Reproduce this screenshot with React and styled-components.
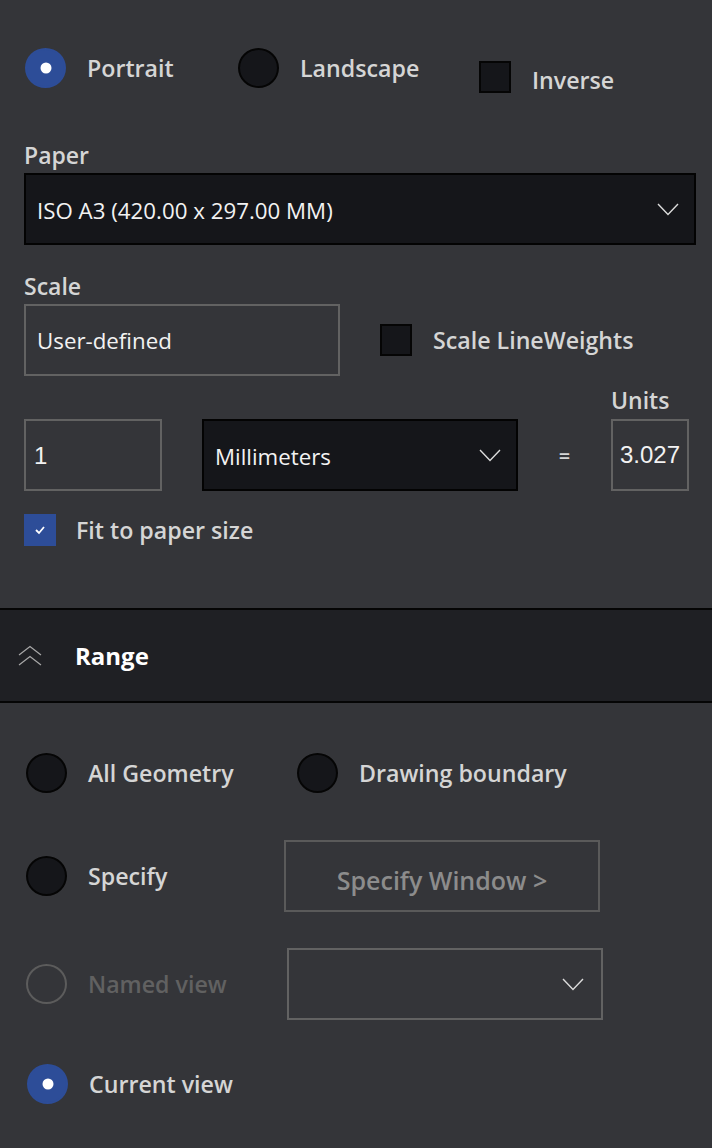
import styled, { createGlobalStyle } from "styled-components";

const GlobalStyle = createGlobalStyle`
  html, body {
    margin: 0;
    padding: 0;
    background: #343539;
  }
  body {
    font-family: "Open Sans", "Noto Sans", sans-serif;
  }
`;

const Chevron = ({ size = 22 }) => (
  <svg width={size} height={13} viewBox="0 0 22 13" fill="none">
    <polyline points="1,1 11,11.5 21,1" stroke="#dcdcdc" strokeWidth="1.4" />
  </svg>
);

const DoubleUp = () => (
  <svg width="26" height="22" viewBox="0 0 26 22" fill="none">
    <polyline points="2,10 13,1.5 24,10" stroke="#a8a8a8" strokeWidth="1.2" />
    <polyline points="2,20 13,11.5 24,20" stroke="#a8a8a8" strokeWidth="1.2" />
  </svg>
);

const Check = () => (
  <svg width="12" height="10" viewBox="0 0 12 10" fill="none">
    <polyline points="2,5 5,8 10,2" stroke="#fff" strokeWidth="1.8" />
  </svg>
);

const App = () => {
  return (
    <Wrapper>
      <GlobalStyle />

      <Section>
        <Row top>
          <Option w={214}>
            <Radio checked />
            <Label>Portrait</Label>
          </Option>
          <Option w={241}>
            <Radio />
            <Label>Landscape</Label>
          </Option>
          <Option low>
            <Box />
            <Label>Inverse</Label>
          </Option>
        </Row>

        <FieldLabel top={50}>Paper</FieldLabel>
        <Select w={672}>
          <SelectText>ISO A3 (420.00 x 297.00 MM)</SelectText>
          <Chevron />
        </Select>

        <FieldLabel top={29}>Scale</FieldLabel>
        <Row>
          <Input w={316}>User-defined</Input>
          <Option indent={40}>
            <Box />
            <Label>Scale LineWeights</Label>
          </Option>
        </Row>

        <UnitsLabel>Units</UnitsLabel>
        <Row>
          <Input w={138} num>
            1
          </Input>
          <Select w={316} gapLeft={40}>
            <SelectText>Millimeters</SelectText>
            <Chevron />
          </Select>
          <Equals>=</Equals>
          <Input w={78} num center>
            3.027
          </Input>
        </Row>

        <FitRow>
          <Box checked>
            <Check />
          </Box>
          <Label>Fit to paper size</Label>
        </FitRow>
      </Section>

      <Header>
        <DoubleUp />
        <HeaderTitle>Range</HeaderTitle>
      </Header>

      <RangeSection>
        <RangeRow>
          <Option w={271} indent={2}>
            <Radio />
            <Label>All Geometry</Label>
          </Option>
          <Option>
            <Radio />
            <Label>Drawing boundary</Label>
          </Option>
        </RangeRow>

        <RangeRow mt={31}>
          <Option w={258} indent={2}>
            <Radio />
            <Label>Specify</Label>
          </Option>
          <GhostButton>Specify Window &gt;</GhostButton>
        </RangeRow>

        <RangeRow mt={36}>
          <Option w={261} indent={2}>
            <Radio disabled />
            <Label disabled>Named view</Label>
          </Option>
          <GhostSelect>
            <Chevron />
          </GhostSelect>
        </RangeRow>

        <RangeRow mt={28}>
          <Option indent={2}>
            <Radio checked />
            <Label>Current view</Label>
          </Option>
        </RangeRow>
      </RangeSection>
    </Wrapper>
  );
};

export default App;

const Wrapper = styled.div`
  width: 712px;
  min-height: 1148px;
  background: #343539;
  overflow: hidden;
`;

const Section = styled.div`
  padding: 48px 16px 62px 24px;
  display: flex;
  flex-direction: column;
`;

const Row = styled.div`
  display: flex;
  align-items: ${(p) => (p.top ? "flex-start" : "center")};
`;

const Option = styled.div`
  display: flex;
  align-items: center;
  gap: 21px;
  flex-shrink: 0;
  height: ${(p) => (p.low ? "32px" : "auto")};
  width: ${(p) => (p.w ? `${p.w}px` : "auto")};
  margin-left: ${(p) => p.indent || 0}px;
  margin-top: ${(p) => (p.low ? "13px" : "0")};

  & > span:last-child {
    margin-top: ${(p) => (p.low ? "6px" : "0")};
  }
`;

const Radio = styled.span`
  box-sizing: border-box;
  width: 41px;
  height: 40px;
  border-radius: 50%;
  flex-shrink: 0;
  position: relative;
  margin-left: ${(p) => (p.checked ? "1px" : "0")};
  background: ${(p) =>
    p.checked ? "#2d4d98" : p.disabled ? "transparent" : "#15161a"};
  border: 2px solid
    ${(p) => (p.checked ? "#2d4d98" : p.disabled ? "#5c5c5c" : "#050505")};

  &::after {
    content: "";
    display: ${(p) => (p.checked ? "block" : "none")};
    position: absolute;
    left: 50%;
    top: 50%;
    width: 11px;
    height: 11px;
    border-radius: 50%;
    background: #fff;
    transform: translate(-50%, -50%);
  }
`;

const Box = styled.span`
  box-sizing: border-box;
  width: 32px;
  height: 32px;
  flex-shrink: 0;
  display: flex;
  align-items: center;
  justify-content: center;
  background: ${(p) => (p.checked ? "#2d4d98" : "#15161a")};
  border: 2px solid ${(p) => (p.checked ? "#2d4d98" : "#050505")};
`;

const Label = styled.span`
  font-size: 23.2px;
  font-weight: 600;
  line-height: 30px;
  color: ${(p) => (p.disabled ? "#616161" : "#d5d5d5")};
  white-space: nowrap;
`;

const FieldLabel = styled.div`
  margin-top: ${(p) => p.top}px;
  margin-bottom: 6px;
  font-size: 23px;
  font-weight: 600;
  color: #d5d5d5;
  line-height: 24px;
`;

const UnitsLabel = styled(FieldLabel)`
  margin-top: 12px;
  margin-bottom: 7px;
  margin-left: 587px;
`;

const Select = styled.div`
  box-sizing: border-box;
  width: ${(p) => p.w}px;
  height: 72px;
  margin-left: ${(p) => p.gapLeft || 0}px;
  flex-shrink: 0;
  display: flex;
  align-items: center;
  justify-content: space-between;
  padding: 3px 15px 0 11px;
  background: #15161a;
  border: 2px solid #030303;

  svg {
    margin-top: -3px;
  }
`;

const SelectText = styled.span`
  font-size: 22.3px;
  color: #f2f2f2;
`;

const Input = styled.div`
  box-sizing: border-box;
  width: ${(p) => p.w}px;
  height: 72px;
  flex-shrink: 0;
  display: flex;
  align-items: center;
  justify-content: ${(p) => (p.center ? "center" : "flex-start")};
  padding: ${(p) => (p.center ? "0" : p.num ? "2px 0 0 8px" : "0 11px")};
  border: 2px solid #626262;
  font-family: ${(p) =>
    p.num ? `"Liberation Sans", Arial, sans-serif` : `"Open Sans", sans-serif`};
  font-size: ${(p) => (p.num ? "24px" : "22.3px")};
  color: #f2f2f2;
`;

const Equals = styled.span`
  width: 93px;
  text-align: center;
  font-size: 20px;
  font-weight: 600;
  color: #d5d5d5;
`;

const FitRow = styled.div`
  display: flex;
  align-items: center;
  gap: 20px;
  margin-top: 23px;
`;

const Header = styled.div`
  height: 91px;
  display: flex;
  align-items: center;
  gap: 32px;
  padding-left: 17px;
  background: #1f2024;
  border-top: 2px solid #050505;
  border-bottom: 2px solid #050505;
`;

const HeaderTitle = styled.span`
  font-size: 24px;
  font-weight: 700;
  color: #ffffff;
`;

const RangeSection = styled.div`
  padding: 34px 16px 40px 24px;
  display: flex;
  flex-direction: column;
`;

const RangeRow = styled.div`
  height: 72px;
  display: flex;
  align-items: center;
  margin-top: ${(p) => p.mt || 0}px;
`;

const GhostButton = styled.div`
  box-sizing: border-box;
  width: 316px;
  height: 72px;
  display: flex;
  align-items: center;
  justify-content: center;
  padding-top: 8px;
  border: 2px solid #5a5a5a;
  font-size: 25px;
  font-weight: 600;
  color: #8c8c8c;
`;

const GhostSelect = styled.div`
  box-sizing: border-box;
  width: 316px;
  height: 72px;
  display: flex;
  align-items: center;
  justify-content: flex-end;
  padding-right: 17px;
  border: 2px solid #626262;
`;
